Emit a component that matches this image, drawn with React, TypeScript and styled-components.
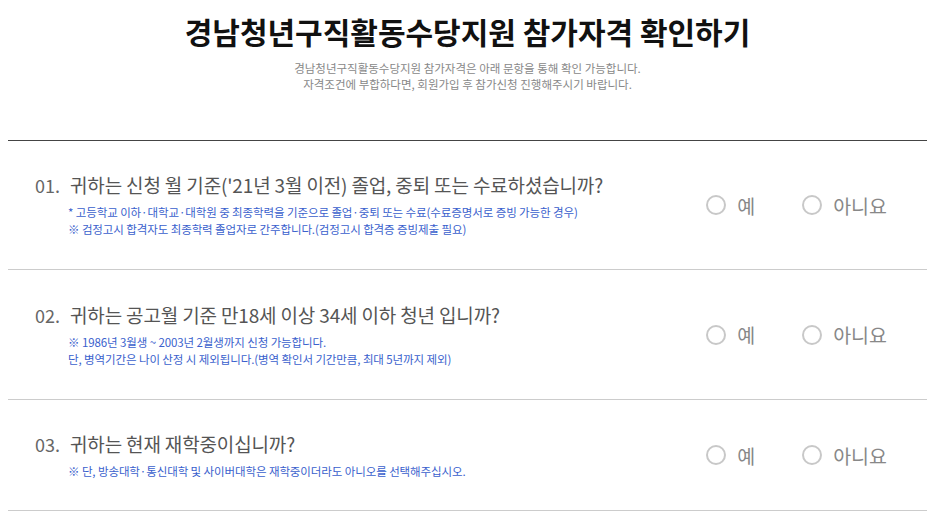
import styled, { createGlobalStyle } from "styled-components";

const GlobalStyle = createGlobalStyle`
  body {
    margin: 0;
    background: #fff;
    font-family: "Noto Sans CJK KR", "Noto Sans", sans-serif;
  }
`;

const Page = styled.div`
  margin: 0 16px 0 8px;
`;

const Header = styled.div`
  display: flex;
  flex-direction: column;
  align-items: center;
  padding-top: 10px;
  height: 141px;
  box-sizing: border-box;
  border-bottom: 1px solid #444;
`;

const Title = styled.h1`
  margin: 0;
  font-size: 30px;
  line-height: 42px;
  font-weight: 700;
  color: #111;
`;

const Desc = styled.p`
  margin: 8px 0 0;
  font-size: 11.5px;
  line-height: 16px;
  color: #888;
  text-align: center;
`;

const Row = styled.div<{ $h: number }>`
  display: flex;
  align-items: center;
  height: ${(p) => p.$h}px;
  box-sizing: border-box;
  padding: 0 40px 0 27px;
  border-bottom: 1px solid #ccc;
`;

const Main = styled.div`
  flex: 1;
  display: flex;
  align-items: flex-start;
`;

const Num = styled.span`
  width: 35px;
  flex-shrink: 0;
  font-size: 18px;
  line-height: 26px;
  color: #666;
`;

const Body = styled.div`
  display: flex;
  flex-direction: column;
`;

const Question = styled.div`
  font-size: 19px;
  line-height: 26px;
  color: #555;
  letter-spacing: -0.15px;
  margin-bottom: 6px;
`;

const Note = styled.div`
  font-size: 11.5px;
  line-height: 17px;
  color: #3a5fcd;
  letter-spacing: -0.1px;
  margin-left: -2px;
`;

const Options = styled.div`
  display: flex;
  gap: 47px;
  align-items: center;
`;

const Option = styled.label`
  display: flex;
  align-items: center;
  gap: 11px;
  font-size: 19.5px;
  color: #888;
  cursor: pointer;
`;

const Circle = styled.span`
  width: 20px;
  height: 20px;
  box-sizing: border-box;
  border: 2px solid #c8c8c8;
  border-radius: 50%;
`;

const questions = [
  {
    no: "01.",
    text: "귀하는 신청 월 기준('21년 3월 이전) 졸업, 중퇴 또는 수료하셨습니까?",
    notes: [
      "* 고등학교 이하·대학교·대학원 중 최종학력을 기준으로 졸업·중퇴 또는 수료(수료증명서로 증빙 가능한 경우)",
      "※ 검정고시 합격자도 최종학력 졸업자로 간주합니다.(검정고시 합격증 증빙제출 필요)",
    ],
    h: 129,
  },
  {
    no: "02.",
    text: "귀하는 공고월 기준 만18세 이상 34세 이하 청년 입니까?",
    notes: [
      "※ 1986년 3월생 ~ 2003년 2월생까지 신청 가능합니다.",
      "단, 병역기간은 나이 산정 시 제외됩니다.(병역 확인서 기간만큼, 최대 5년까지 제외)",
    ],
    h: 130,
  },
  {
    no: "03.",
    text: "귀하는 현재 재학중이십니까?",
    notes: ["※ 단, 방송대학·통신대학 및 사이버대학은 재학중이더라도 아니오를 선택해주십시오."],
    h: 111,
  },
];

export default function App() {
  return (
    <>
      <GlobalStyle />
      <Page>
        <Header>
          <Title>경남청년구직활동수당지원 참가자격 확인하기</Title>
          <Desc>
            경남청년구직활동수당지원 참가자격은 아래 문항을 통해 확인 가능합니다.
            <br />
            자격조건에 부합하다면, 회원가입 후 참가신청 진행해주시기 바랍니다.
          </Desc>
        </Header>
        {questions.map((q) => (
          <Row key={q.no} $h={q.h}>
            <Main>
              <Num>{q.no}</Num>
              <Body>
                <Question>{q.text}</Question>
                {q.notes.map((n) => (
                  <Note key={n}>{n}</Note>
                ))}
              </Body>
            </Main>
            <Options>
              <Option>
                <Circle />
                예
              </Option>
              <Option>
                <Circle />
                아니요
              </Option>
            </Options>
          </Row>
        ))}
      </Page>
    </>
  );
}
